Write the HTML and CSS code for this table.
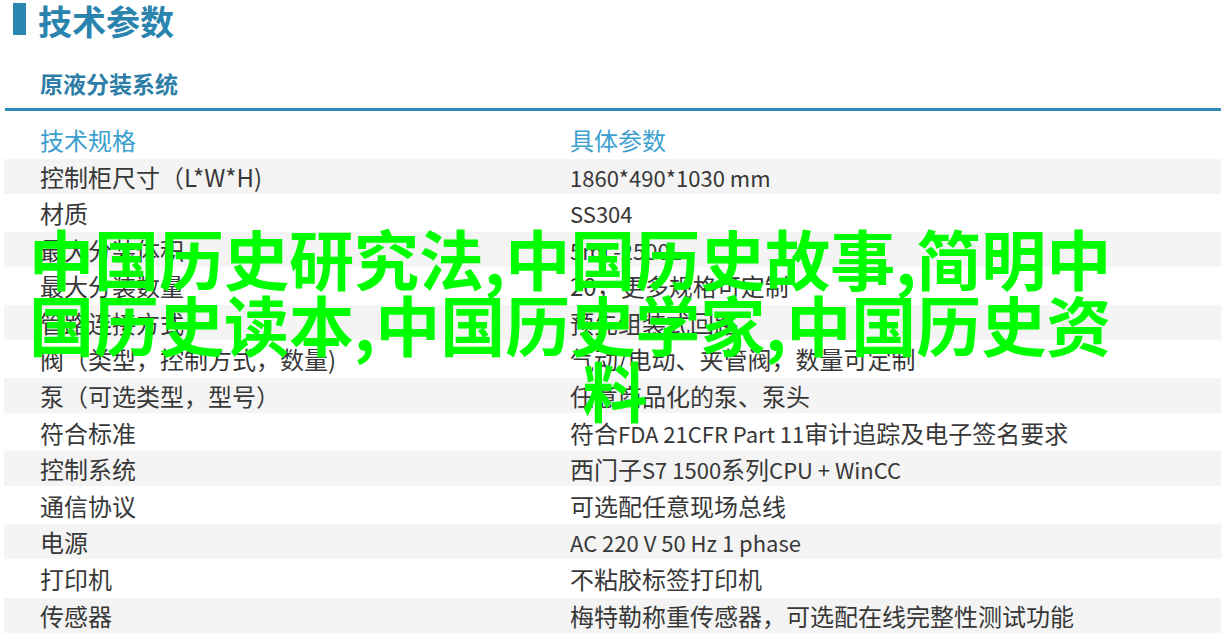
FILE: index.html
```html
<!DOCTYPE html>
<html lang="zh-CN">
<head>
<meta charset="utf-8">
<title>技术参数</title>
<link rel="stylesheet" href="styles.css">
</head>
<body>
<div class="page">
  <div class="title">
    <span class="bar"></span>
    <h1>技术参数</h1>
  </div>
  <h2 class="sub">原液分装系统</h2>
  <div class="rule"></div>
  <div class="table">
    <div class="row head"><div class="c1">技术规格</div><div class="c2">具体参数</div></div>
    <div class="row alt"><div class="c1">控制柜尺寸（L*W*H)</div><div class="c2"><span class="lat">1860*490*1030 mm</span></div></div>
    <div class="row"><div class="c1">材质</div><div class="c2"><span class="lat">SS304</span></div></div>
    <div class="row alt"><div class="c1">最大分装体积</div><div class="c2"><span class="lat">5mL-2500L</span></div></div>
    <div class="row"><div class="c1">最大分装数量</div><div class="c2">20，更多规格可定制</div></div>
    <div class="row alt"><div class="c1">管路连接方式</div><div class="c2">预先组装式回路</div></div>
    <div class="row"><div class="c1">阀（类型，控制方式，数量)</div><div class="c2">气动/电动、夹管阀，数量可定制</div></div>
    <div class="row alt"><div class="c1">泵（可选类型，型号）</div><div class="c2">任意商品化的泵、泵头</div></div>
    <div class="row"><div class="c1">符合标准</div><div class="c2">符合<span class="lat">FDA 21CFR Part 11</span>审计追踪及电子签名要求</div></div>
    <div class="row alt"><div class="c1">控制系统</div><div class="c2">西门子<span class="lat">S7 1500</span>系列<span class="lat">CPU + WinCC</span></div></div>
    <div class="row"><div class="c1">通信协议</div><div class="c2">可选配任意现场总线</div></div>
    <div class="row alt"><div class="c1">电源</div><div class="c2"><span class="lat">AC 220 V 50 Hz 1 phase</span></div></div>
    <div class="row"><div class="c1">打印机</div><div class="c2">不粘胶标签打印机</div></div>
    <div class="row alt"><div class="c1">传感器</div><div class="c2">梅特勒称重传感器，可选配在线完整性测试功能</div></div>
  </div>
  <div class="overlay">中国历史研究法,中国历史故事,简明中国历史读本,中国历史学家,中国历史资<span class="shift">料</span></div>
</div>
</body>
</html>
```

FILE: styles.css
```css
html, body {
  margin: 0;
  padding: 0;
  background: #ffffff;
}

body {
  font-family: "Noto Sans CJK SC", "Noto Sans", sans-serif;
  color: #383838;
  overflow: hidden;
}

.page {
  position: relative;
  margin: 0 4px;
  height: 641px;
}

.title {
  display: flex;
  align-items: flex-start;
  gap: 12px;
  height: 42px;
  padding-left: 9px;
}

.bar {
  display: block;
  width: 13px;
  height: 32px;
  margin-top: 3px;
  background: #2a86b0;
}

.title h1 {
  margin: 0;
  font-size: 34px;
  line-height: 42px;
  font-weight: 700;
  color: #2b84ae;
}

.sub {
  margin: 0;
  padding: 25px 0 0 36px;
  font-size: 23px;
  line-height: 32px;
  font-weight: 700;
  color: #2d7ea6;
}

.rule {
  margin: 9px 0 0 1px;
  height: 3px;
  background: #2e8bb7;
}

.table {
  display: flex;
  flex-direction: column;
  gap: 1.58px;
  margin-top: 11px;
}

.row {
  display: grid;
  grid-template-columns: 530px 1fr;
  height: 35px;
  align-items: center;
}

.row.alt {
  background: #f4f4f4;
}

.c1 {
  padding-left: 36px;
  font-size: 24px;
  white-space: nowrap;
}

.c2 {
  padding-left: 36px;
  font-size: 24px;
  white-space: nowrap;
}

.c2 .lat {
  font-size: 22px;
}

.row.head .c1,
.row.head .c2 {
  font-size: 24px;
  color: #3d9fcf;
}

.overlay {
  position: absolute;
  top: 224px;
  left: 25px;
  width: 1100px;
  font-size: 65px;
  line-height: 66px;
  font-weight: 700;
  color: #00ff00;
  text-align: left;
  text-align-last: center;
  z-index: 5;
}

.overlay .shift {
  position: relative;
  left: 36px;
}
```
